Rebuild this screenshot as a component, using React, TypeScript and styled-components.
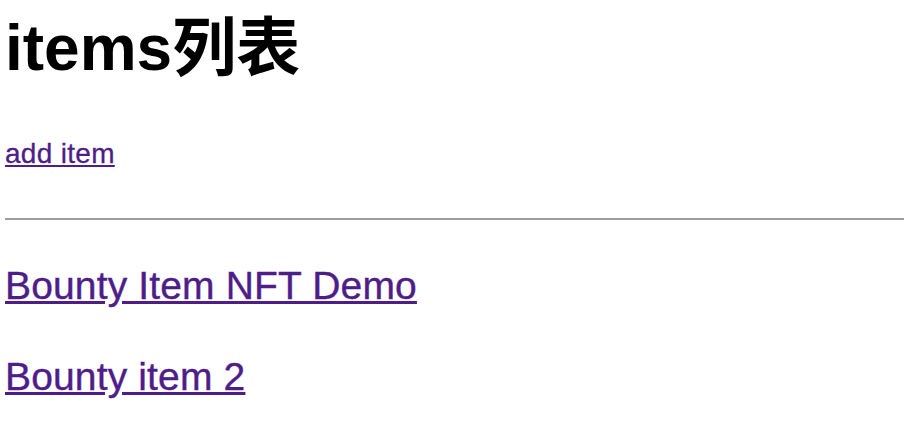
import React from 'react';
import styled, { createGlobalStyle } from 'styled-components';

const GlobalStyle = createGlobalStyle`
  html, body {
    margin: 0;
    padding: 0;
    background: #ffffff;
  }
  body {
    font-family: "Liberation Sans", "Noto Sans CJK SC", Arial, sans-serif;
    color: #000000;
  }
`;

const Page = styled.div`
  display: flex;
  flex-direction: column;
  padding: 8px 0 0 5px;
`;

const Title = styled.h1`
  margin: 0;
  font-size: 64px;
  line-height: 80px;
  font-weight: 700;
`;

const AddLink = styled.a`
  margin-top: 50px;
  align-self: flex-start;
  font-size: 28px;
  line-height: 32px;
  letter-spacing: 0.3px;
  color: #4f1d89;
  text-decoration: underline;
  -webkit-text-stroke: 0.3px #4f1d89;
`;

const Divider = styled.hr`
  margin: 48px 0 0 0;
  border: none;
  height: 2px;
  background: #9d9d9d;
`;

const ItemList = styled.ul`
  list-style: none;
  margin: 44px 0 0 0;
  padding: 0;
  display: flex;
  flex-direction: column;
  gap: 47px;
`;

const ItemTitle = styled.li`
  font-size: 39px;
  line-height: 44px;
  font-weight: 400;
  letter-spacing: 0.15px;
`;

const ItemLink = styled.a`
  color: #4f1d89;
  text-decoration: underline;
  -webkit-text-stroke: 0.4px #4f1d89;
`;

const items = [
  { id: 1, name: 'Bounty Item NFT Demo' },
  { id: 2, name: 'Bounty item 2' },
];

const App: React.FC = () => {
  return (
    <>
      <GlobalStyle />
      <Page>
        <Title>items列表</Title>
        <AddLink href="#">add item</AddLink>
        <Divider />
        <ItemList>
          {items.map((item) => (
            <ItemTitle key={item.id}>
              <ItemLink href="#">{item.name}</ItemLink>
            </ItemTitle>
          ))}
        </ItemList>
      </Page>
    </>
  );
};

export default App;
